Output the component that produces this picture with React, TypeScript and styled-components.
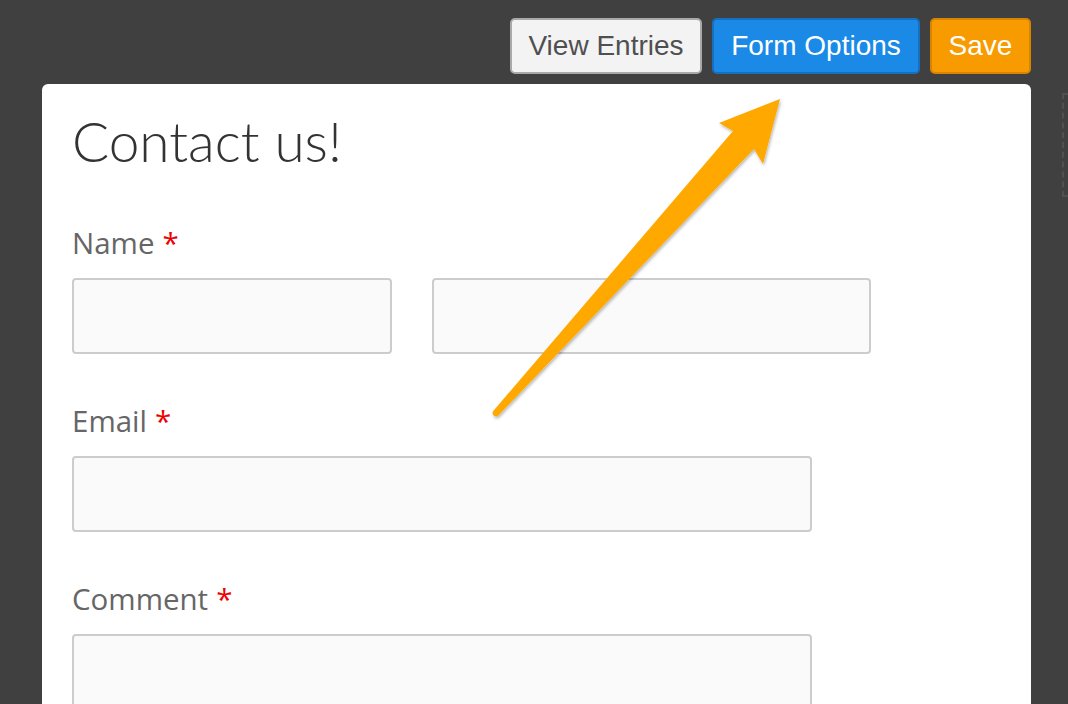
import React from "react";
import styled, { createGlobalStyle } from "styled-components";

const Global = createGlobalStyle`
  html, body {
    margin: 0;
    padding: 0;
    background: #404040;
    height: 704px;
    overflow: hidden;
  }
  * { box-sizing: border-box; }
`;

const Page = styled.div`
  position: relative;
  width: 1068px;
  height: 704px;
  padding-top: 18px;
  overflow: hidden;
`;

const Toolbar = styled.div`
  display: flex;
  justify-content: flex-end;
  gap: 10px;
  padding-right: 37px;
`;

const variants = {
  light: { bg: "#f3f3f3", border: "#a9a9a9", color: "#4f4f4f" },
  blue: { bg: "#1b8ae6", border: "#166fc0", color: "#ffffff" },
  orange: { bg: "#f89b00", border: "#d78400", color: "#ffffff" },
};

const Button = styled.button<{ $variant: keyof typeof variants; $width: number }>`
  height: 56px;
  width: ${(p) => p.$width}px;
  padding: 0;
  border-radius: 5px;
  border: 2px solid ${(p) => variants[p.$variant].border};
  background: ${(p) => variants[p.$variant].bg};
  color: ${(p) => variants[p.$variant].color};
  font-family: "Liberation Sans", Arial, sans-serif;
  font-size: 28px;
  line-height: 1;
  display: flex;
  align-items: center;
  justify-content: center;
`;

const Card = styled.div`
  margin: 10px 0 0 42px;
  width: 989px;
  height: 700px;
  background: #ffffff;
  border-radius: 6px;
  padding: 25px 30px 0;
`;

const Title = styled.h1`
  margin: 0 0 48px;
  font-family: Lato, "Open Sans", sans-serif;
  font-weight: 300;
  font-size: 55px;
  line-height: 65px;
  color: #333333;
`;

const Field = styled.div`
  margin-bottom: 46px;
`;

const Label = styled.div`
  font-family: "Open Sans", sans-serif;
  font-size: 29.5px;
  line-height: 41px;
  color: #666666;
  margin-bottom: 15px;
`;

const Required = styled.span`
  color: #ee0000;
  margin-left: 8px;
`;

const Row = styled.div`
  display: flex;
  gap: 40px;
`;

const Input = styled.div<{ $width: number; $height?: number }>`
  width: ${(p) => p.$width}px;
  height: ${(p) => p.$height ?? 76}px;
  background: #fafafa;
  border: 2px solid #cccccc;
  border-radius: 4px;
`;

const DashedEdge = styled.div`
  position: absolute;
  left: 1062px;
  top: 93px;
  width: 12px;
  height: 104px;
  border: 2px dashed #505050;
  border-right: none;
`;

const ArrowLayer = styled.svg`
  position: absolute;
  left: 0;
  top: 0;
  pointer-events: none;
`;

function Arrow() {
  return (
    <ArrowLayer width={1068} height={704} viewBox="0 0 1068 704">
      <defs>
        <filter id="sh" x="-10%" y="-10%" width="120%" height="120%">
          <feDropShadow dx="1" dy="2" stdDeviation="1.5" floodColor="#000" floodOpacity="0.28" />
        </filter>
      </defs>
      <path
        d="M780,99 L719,123 L733,131 L493.5,410.7 A3.4,3.4 0 0 0 498.5,415.3 L754,149 L763,164 Z"
        fill="#ffa800"
        filter="url(#sh)"
      />
    </ArrowLayer>
  );
}

export default function App() {
  return (
    <>
      <Global />
      <Page>
        <Toolbar>
          <Button $variant="light" $width={192}>View Entries</Button>
          <Button $variant="blue" $width={208}>Form Options</Button>
          <Button $variant="orange" $width={101}>Save</Button>
        </Toolbar>
        <Card>
          <Title>Contact us!</Title>
          <Field>
            <Label>
              Name<Required>*</Required>
            </Label>
            <Row>
              <Input $width={320} />
              <Input $width={439} />
            </Row>
          </Field>
          <Field>
            <Label>
              Email<Required>*</Required>
            </Label>
            <Input $width={740} />
          </Field>
          <Field>
            <Label>
              Comment<Required>*</Required>
            </Label>
            <Input $width={740} $height={160} />
          </Field>
        </Card>
        <DashedEdge />
        <Arrow />
      </Page>
    </>
  );
}
